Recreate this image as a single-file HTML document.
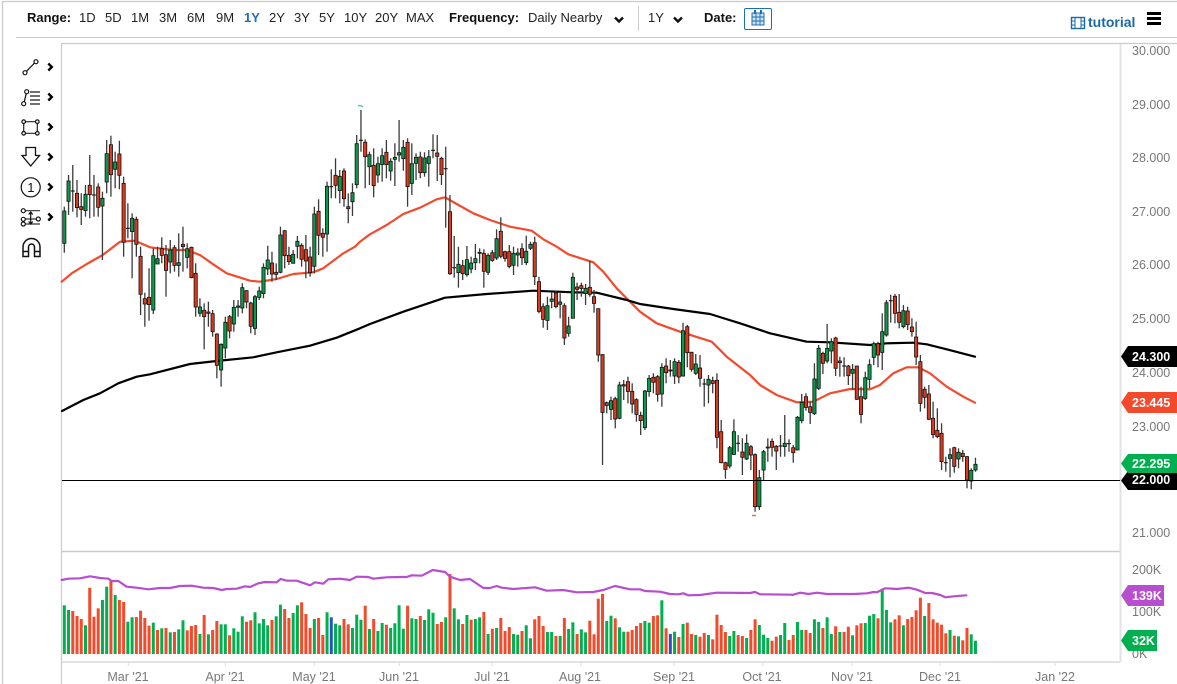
<!DOCTYPE html>
<html><head><meta charset="utf-8"><title>Chart</title>
<style>
html,body{margin:0;padding:0;background:#fff;width:1177px;height:684px;overflow:hidden}
svg{display:block}
text{font-family:"Liberation Sans",sans-serif;font-size:13px}
.h{fill:#222}.b{font-weight:bold;fill:#111}
.p{fill:#777;font-size:12.5px}
.t{fill:#fff;font-weight:bold;font-size:12.5px}
</style></head><body>
<svg id="s" xmlns="http://www.w3.org/2000/svg" width="1177" height="684" viewBox="0 0 1177 684">
<rect width="1177" height="684" fill="#fff"/>
<g stroke="#ccc" fill="none">
<path d="M2.5 1.5H1177M2.5 1V684" stroke-width="1.3"/>
<path d="M16 37.5H1177" stroke-width="1"/>
<path d="M61.5 43.5H1177M61.5 43V684" stroke-width="1.2"/>
<path d="M62 551.5H1120" stroke-width="1.6"/>
<path d="M1120.5 44V662" stroke="#e2e2e2" stroke-width="2"/>
<path d="M62 662H1120" stroke="#e2e2e2" stroke-width="2"/>
<path d="M128.3 662v4M225.3 662v4M314.3 662v4M399.3 662v4M492.3 662v4M580.7 662v4M674 662v4M762.7 662v4M852 662v4M940 662v4M1055 662v4" stroke="#ddd"/>
</g>
<!-- header -->
<text x="27" y="22" class="b">Range:</text>
<g class="h">
<text x="79" y="22">1D</text><text x="105" y="22">5D</text><text x="131" y="22">1M</text><text x="159" y="22">3M</text><text x="187" y="22">6M</text><text x="216" y="22">9M</text>
<text x="244" y="22" style="fill:#1a6fc0;font-weight:bold">1Y</text>
<text x="269" y="22">2Y</text><text x="294" y="22">3Y</text><text x="319" y="22">5Y</text><text x="344" y="22">10Y</text><text x="375" y="22">20Y</text><text x="406" y="22">MAX</text>
<text x="449" y="22" class="b">Frequency:</text>
<text x="528" y="22">Daily Nearby</text>
<text x="648" y="22">1Y</text>
<text x="704" y="22" class="b">Date:</text>
</g>
<path d="M615 17.5l4 4 4-4M674 17.5l4 4 4-4" fill="none" stroke="#111" stroke-width="2.4"/>
<path d="M638.5 6V31" stroke="#ccc"/>
<rect x="744.5" y="8.5" width="27" height="21" rx="1.5" fill="#fff" stroke="#1a6fb5"/>
<g fill="none" stroke="#1f6fb0">
<rect x="752" y="13" width="12" height="12" fill="#cfe2f3"/>
<path d="M756 13v12M760 13v12M752 17h12M752 21h12" stroke-width=".9"/>
<path d="M755 10v4M761 10v4" stroke-width="2"/>
</g>
<g fill="none" stroke="#1a6aa5">
<rect x="1071.5" y="17.5" width="13" height="11" stroke-width="1.4"/>
<path d="M1075 17v11M1081 17v11M1071 21h4M1071 25h4M1081 21h4M1081 25h4" stroke-width="1"/>
</g>
<text x="1088" y="27" style="fill:#1a6aa5;font-weight:bold;font-size:14px">tutorial</text>
<path d="M1147 13.5h14M1147 18.5h14M1147 23.5h14" stroke="#000" stroke-width="3"/>
<!-- tool icons -->
<g fill="none" stroke="#111" stroke-width="1.2">
<path d="M26.5 71.3L34.5 63"/><circle cx="25" cy="72.7" r="2"/><circle cx="36" cy="61.7" r="2"/>
<path d="M24.3 101.7L26.2 93.7"/><circle cx="23.7" cy="103.7" r="2"/><circle cx="26.7" cy="91.7" r="2"/>
<path d="M30 92h10M30 96h10M30 100h10M30 104h10" stroke="#444" stroke-width="1.4"/>
<path d="M25 121.7h11M25 133.3h11" stroke="#223"/><path d="M23.7 123v9M37.3 123v9" stroke="#223"/>
<circle cx="23.7" cy="121.7" r="1.8" fill="#fff"/><circle cx="37.3" cy="121.7" r="1.8" fill="#fff"/><circle cx="23.7" cy="133.3" r="1.8" fill="#fff"/><circle cx="37.3" cy="133.3" r="1.8" fill="#fff"/>
<path d="M26 147.5h9.5v8h4L30.7 166 22 155.5h4z" stroke="#111" stroke-width="1.3"/>
<circle cx="30.7" cy="187.3" r="9.5" stroke="#111" stroke-width="1.2"/>
<path d="M25 210.7h15M25 219h14M25 224h15" stroke="#333" stroke-width="1.2"/>
<circle cx="23.3" cy="210.7" r="2" fill="#fff"/><circle cx="23.3" cy="219.3" r="2" fill="#fff"/><circle cx="23.3" cy="224" r="2" fill="#fff"/><circle cx="38.3" cy="219" r="2" fill="#fff"/>
<path d="M30.7 212v12M28.7 214.5l2-2.5 2 2.5M28.7 221.5l2 2.5 2-2.5" stroke="#111" stroke-width="1.2"/>
<path d="M23 256.5V247a8.5 8.5 0 0 1 17 0v9.5h-5.5V247a3 3 0 0 0-6 0v9.5z" stroke="#111" stroke-width="1.5"/>
<path d="M23 251.5h5.5M34.5 251.5H40" stroke="#111" stroke-width="1.5"/>
</g>
<text x="27.2" y="192" style="font-size:13px;fill:#111">1</text>
<path d="M48.3 63.5l3.5 3.5-3.5 3.5M48.3 93.5l3.5 3.5-3.5 3.5M48.3 123.5l3.5 3.5-3.5 3.5M48.3 153.5l3.5 3.5-3.5 3.5M48.3 183.5l3.5 3.5-3.5 3.5M48.3 213.5l3.5 3.5-3.5 3.5" fill="none" stroke="#000" stroke-width="2.4"/>
<g id="chart"></g>
<path d="M358 105.7q3-.6 5 1.2" fill="none" stroke="#3fcf8a" stroke-width="1.4"/>
<path d="M752 515.5h4" fill="none" stroke="#f0604a" stroke-width="1.4"/>
<path d="M62 480.5H1120" stroke="#000" stroke-width="1"/>
<!-- price labels -->
<g class="p">
<text x="1132" y="55" class="p">30.000</text><text x="1132" y="109" class="p">29.000</text><text x="1132" y="162" class="p">28.000</text><text x="1132" y="216" class="p">27.000</text><text x="1132" y="269" class="p">26.000</text><text x="1132" y="323" class="p">25.000</text><text x="1132" y="377" class="p">24.000</text><text x="1132" y="431" class="p">23.000</text><text x="1132" y="537" class="p">21.000</text>
<text x="1132" y="574" class="p">200K</text><text x="1132" y="616" class="p">100K</text><text x="1132" y="658" class="p">0K</text>
</g>
<path d="M1121 356.5l7-10.5H1177V367H1128z" fill="#000"/>
<path d="M1121 402.5l7-10.5H1177V413H1128z" fill="#f44a2c"/>
<path d="M1121 480.5l7-9.5H1177V490H1128z" fill="#000"/>
<path d="M1121 463.5l7-9.5H1177V473H1128z" fill="#00b050"/>
<path d="M1121 595.5l7-10.5H1164V606H1128z" fill="#b84dd0"/>
<path d="M1121 640.5l7-10.5H1157V651H1128z" fill="#00b050"/>
<text x="1132" y="361" class="t">24.300</text><text x="1132" y="407" class="t">23.445</text><text x="1132" y="468" class="t">22.295</text><text x="1132" y="484" class="t">22.000</text>
<text x="1132" y="600" class="t">139K</text><text x="1132" y="645" class="t">32K</text>
<!-- date labels -->
<g text-anchor="middle">
<text x="128" y="681" class="p">Mar '21</text><text x="225" y="681" class="p">Apr '21</text><text x="314" y="681" class="p">May '21</text><text x="399" y="681" class="p">Jun '21</text><text x="492" y="681" class="p">Jul '21</text><text x="580" y="681" class="p">Aug '21</text><text x="674" y="681" class="p">Sep '21</text><text x="762" y="681" class="p">Oct '21</text><text x="852" y="681" class="p">Nov '21</text><text x="940" y="681" class="p">Dec '21</text><text x="1055" y="681" class="p">Jan '22</text>
</g>
</svg>
<script>
(function(){
var A=[[1,333,430,320,458],[1,243,304,225,345],[2,273,274,195,335],[0,280,323,240,352],[0,320,328,280,375],[1,283,332,255,350],[0,256,284,165,355],[2,285,286,225,350],[0,261,322,250,350],[1,295,318,275,480],
[1,161,246,120,280],[0,134,224,107,290],[1,186,208,155,265],[0,162,226,122,268],[0,250,427,230,470],[2,385,386,310,415],[1,355,395,340,535],[0,358,433,350,470],[0,469,583,440,645],[0,596,612,578,680],
[0,592,614,505,662],[1,467,630,445,642],[1,476,492,440,492],[0,446,466,412,490],[0,464,511,435,590],[1,450,486,420,520],[0,443,496,435,515],[1,488,496,400,530],[0,433,440,380,515],[1,446,472,430,505],
[0,442,533,440,535],[0,520,621,490,650],[1,621,640,595,650],[0,631,650,610,748],[0,636,640,605,680],[0,641,695,630,710],[0,702,796,700,835],[1,733,810,730,860],[1,667,744,650,775],[0,650,693,645,715],
[1,622,672,600,695],[1,618,622,600,650],[1,563,624,550,640],[0,572,606,570,625],[0,609,679,605,700],[1,590,685,585,705],[1,573,592,560,600],[1,502,581,490,595],[1,480,507,437,525],[0,489,522,455,545],
[0,517,523,490,540],[1,405,517,380,520],[0,392,467,390,505],[0,466,485,440,495],[1,463,490,450,490],[1,424,439,408,475],[0,436,478,430,500],[0,449,483,405,535],[0,471,518,440,530],[1,342,499,320,520],
[0,334,406,298,465],[0,400,412,385,470],[1,259,402,245,455],[2,260,261,208,295],[0,226,256,175,295],[1,229,272,210,310],[0,213,296,205,320],[0,320,326,280,370],[1,278,305,250,348],[1,131,254,105,265],
[2,121,122,30,155],[0,127,170,118,265],[1,164,200,155,255],[0,196,257,145,292],[1,191,225,170,248],[1,167,193,145,245],[0,157,194,120,235],[1,184,213,175,242],[1,172,178,130,258],[1,158,165,60,185],
[1,142,176,120,212],[0,127,260,115,320],[1,191,250,130,285],[1,172,190,160,240],[0,171,218,155,235],[1,174,218,157,230],[1,170,190,150,260],[2,151,152,103,175],[0,159,169,105,243],[0,175,224,170,255],
[2,206,207,140,383],[0,335,521,285,525],[2,503,504,408,533],[1,493,518,440,563],[0,497,521,480,540],[1,479,524,438,530],[1,489,507,470,520],[1,476,488,432,510],[1,457,460,445,490],[0,460,514,448,563],
[1,466,517,460,525],[0,458,481,450,485],[1,416,474,388,480],[0,394,469,352,475],[0,455,475,452,485],[0,455,499,435,505],[1,460,496,440,525],[1,459,465,445,500],[0,446,473,430,495],[1,454,488,407,495],
[1,433,445,425,450],[0,428,530,410,555],[0,545,634,530,640],[0,620,658,610,683],[1,617,661,590,690],[1,597,604,575,625],[0,579,620,572,625],[1,606,613,580,655],[0,617,714,610,735],[1,678,700,650,710],
[1,532,655,518,655],[0,561,568,548,600],[0,557,565,548,590],[1,565,581,552,615],[0,562,583,483,590]];
var B=[[0,50,70,30,98],[0,86,225,85,245],[0,224,397,222,555],[0,368,376,365,400],[1,362,388,350,420],[0,356,417,350,445],[1,315,415,305,418],[1,314,318,300,360],[0,305,334,290,370],[0,334,372,310,400],
[0,359,403,355,425],[0,406,422,395,465],[1,333,443,330,450],[1,295,335,285,350],[0,292,307,280,340],[0,290,343,285,365],[1,262,342,250,380],[0,258,278,235,310],[0,270,272,240,290],[1,245,288,235,312],
[0,247,291,240,310],[1,152,288,128,290],[0,140,218,135,262],[0,217,268,215,275],[1,252,280,222,285],[0,264,295,225,320],[2,312,313,296,380],[1,298,315,285,370],[0,302,310,290,340],[0,301,472,280,505],
[0,455,548,420,550],[0,548,568,545,596],[1,503,558,498,565],[1,455,523,418,525],[2,490,491,465,515],[0,516,532,475,585],[1,490,537,463,540],[0,500,525,495,570],[0,524,680,520,695],[1,593,680,570,690],
[1,515,570,510,600],[1,501,504,475,545],[0,484,502,475,530],[0,499,513,495,570],[2,498,499,465,530],[1,490,500,405,530],[2,491,492,478,515],[0,503,518,495,548],[1,412,510,408,510],[1,367,422,342,430],
[0,350,382,340,392],[0,380,397,365,432],[1,297,401,250,405],[1,205,325,195,330],[0,220,250,215,282],[1,205,243,132,250],[1,185,213,175,250],[0,174,265,170,288],[0,243,248,230,290],[2,258,259,232,290],
[0,258,287,255,315],[1,268,280,252,330],[0,258,358,258,360],[0,350,403,320,430],[1,293,355,275,360],[1,254,298,238,325],[1,191,232,185,255],[0,191,225,185,262],[1,155,217,100,270],[1,68,165,60,170],
[2,62,63,44,128],[0,49,100,42,130],[0,97,127,42,145],[1,92,140,75,145],[0,93,134,80,150],[0,141,155,115,170],[0,171,231,125,255],[0,245,370,225,395],[0,328,352,320,385],[0,342,418,315,420],
[0,415,464,365,475],[0,451,470,385,475],[0,460,545,430,570],[2,548,549,530,575],[1,524,535,505,592],[0,503,559,500,578],[1,517,537,505,565],[0,520,530,510,545],[0,530,600,528,625],[1,571,603,565,628],[1,553,570,533,575]];
var VC="GGRRRGRRRG"+"GRGRRGGRRR"+"RGRGRGRGGR"+"RRGRGRRGGR"+"GGGRRGGGGR"+"GGRRGGRRRG"+"RRGBGGRRGG"+"GRGRGGRGGG"+
"GRGGRGGGRR"+"GRGGRGRGGR"+"GRGRRRGGRG"+"GRRRGGRGRG"+"GRGGRRRRGG"+"RGGRRRRGGR"+"RGRBGRGRRG"+"RRGRRRRGGR"+"RGRRGGGRRG"+"GRRG"+
"GRRGGRGGRG"+"RRGRRGGGRG"+"GGRRGRRRRG"+"RRRRRGRGRR"+"GG";
var VT=[166,180,183,198,207,226,113,200,175,150,110,92,135,150,156,215,202,201,182,204,227,218,240,235,234,247,246,238,211,241,228,225,252,195,253,240,213,223,223,256,235,245,199,215,211,187,220,207,226,210,199,164,177,204,189,166,157,192,234,207,204,255,187,202,221,226,207,223,234,194,209,167,237,207,243,219,224,234,220,166,
236,167,205,207,198,210,178,188,222,216,202,72,175,208,222,195,209,207,202,186,252,236,234,204,243,231,252,254,243,226,265,208,198,228,246,246,258,258,204,237,217,252,238,247,212,253,146,132,213,197,205,232,245,245,240,228,219,213,218,198,196,151,235,252,245,261,222,218,252,255,260,249,255,268,194,225,246,258,243,255,258,264,240,208,225,254,264,272,260,255,219,270,255,216,
240,240,249,208,216,234,202,252,229,246,246,230,256,226,220,219,197,192,205,116,180,217,208,196,226,207,201,181,143,198,159,208,218,224,250,240,257,259,271,234,253,272];
function X(i){return 64.3+4.238*i}
function map(a,ox,oy){return a.map(function(p){return [ox+p[0]/3,oy+p[1]/3]})}
function pl(pts,c){return '<polyline fill="none" stroke-linejoin="round" stroke-linecap="round" stroke="'+c+'" stroke-width="2.2" points="'+pts.map(function(p){return p[0].toFixed(1)+','+p[1].toFixed(1)}).join(' ')+'"/>'}
var red=map([[5,545],[35,520],[80,492],[128,465],[180,425],[225,422],[270,442],[340,450],[380,450],[420,465],[455,490],[500,520],[570,542],[600,545],[650,537],[700,522],[760,517],[790,505],[850,460],[885,440],[900,425]],60,100)
.concat(map([[90,403],[140,375],[190,342],[240,323],[290,298],[315,292],[350,312],[400,340],[450,360],[510,380],[575,392],[610,418],[650,440],[685,463],[760,487],[790,515],[830,565],[870,605],[900,635]],340,100))
.concat(map([[200,130],[270,155],[365,185],[410,230],[480,285],[510,315],[560,345],[620,367],[670,365],[720,340],[780,327],[840,328]],590,280))
.concat(map([[60,315],[100,280],[140,262],[175,262],[210,280],[260,320],[310,350],[345,368]],860,280));
var blk=[[62,411]].concat(map([[70,900],[120,880],[175,850],[230,830],[270,823],[390,792],[470,783],[580,772],[650,757],[750,737],[830,713],[900,685]],60,100))
.concat(map([[90,672],[190,635],[315,593],[440,582],[580,572],[700,577],[770,578],[860,600],[900,612]],340,100))
.concat(map([[250,87],[360,102],[450,130],[540,160],[650,185],[720,187],[840,195]],590,280))
.concat(map([[80,190],[160,188],[200,193],[260,208],[345,230]],860,280));
var pur=map([[185,90],[205,86],[240,85],[270,79],[300,84],[325,86],[335,93],[355,93],[380,110],[410,113],[445,118],[480,114],[510,114],[540,108],[575,107],[610,113],[640,114],[665,120],[680,117],[710,116],[735,109],[750,111],[775,100],[795,96],[830,97],[842,87],[860,92],[890,92],[930,106],[945,97],[970,101],[985,88],[1020,86],[1050,90],[1070,80],[1105,81],[1120,86],[1160,82],[1200,81]],0,550)
.concat(map([[20,81],[35,76],[65,77],[98,60],[135,66],[150,80],[180,90],[210,87],[250,114],[270,114],[290,108],[305,113],[340,117],[405,112],[440,122],[490,120],[530,127],[580,126],[610,120],[645,108],[690,118],[720,118],[735,123],[780,125],[810,132],[835,133],[850,130],[865,136],[900,135],[950,128],[1050,129],[1065,126],[1080,133],[1180,134]],400,550))
.concat(map([[45,135],[70,128],[95,132],[120,128],[150,132],[230,132],[270,130],[290,126],[300,127],[325,115],[360,117],[395,113],[420,119],[445,129],[465,129],[490,135],[505,142],[530,139],[568,136]],777,550));
var h='';
for(var i=0;i<VT.length;i++){var c=VC.charAt(i),f=c=='G'?'#00b050':c=='R'?'#f44a2c':'#2a52be',t=550+VT[i]/3;
h+='<rect x="'+(X(i)-1.5).toFixed(2)+'" y="'+t.toFixed(1)+'" width="3" height="'+(654-t).toFixed(1)+'" fill="'+f+'"/>';}
h+=pl(pur,'#b84dd0');
h+=pl(red,'#f44a2c');
h+=pl(blk,'#000');
function cd(arr,start,oy){arr.forEach(function(d,k){var x=X(start+k),a=oy+d[1]/3,b=oy+d[2]/3,w1=oy+d[3]/3,w2=oy+d[4]/3;
h+='<path d="M'+x.toFixed(2)+' '+w1.toFixed(1)+'V'+w2.toFixed(1)+'" stroke="#3a3a3a" stroke-width="1.3"/>';
if(d[0]==2){h+='<path d="M'+(x-1.9).toFixed(2)+' '+a.toFixed(1)+'h3.8" stroke="#111" stroke-width="1.1"/>';}
else{h+='<rect x="'+(x-1.6).toFixed(2)+'" y="'+a.toFixed(1)+'" width="3.2" height="'+Math.max(b-a,1).toFixed(1)+'" fill="'+(d[0]==1?'#0b9a4a':'#dc3a1e')+'" stroke="#111" stroke-width=".8"/>';}
});}
cd(A,0,100);cd(B,125,280);
document.getElementById('chart').innerHTML=h;
})();
</script>
</body></html>
